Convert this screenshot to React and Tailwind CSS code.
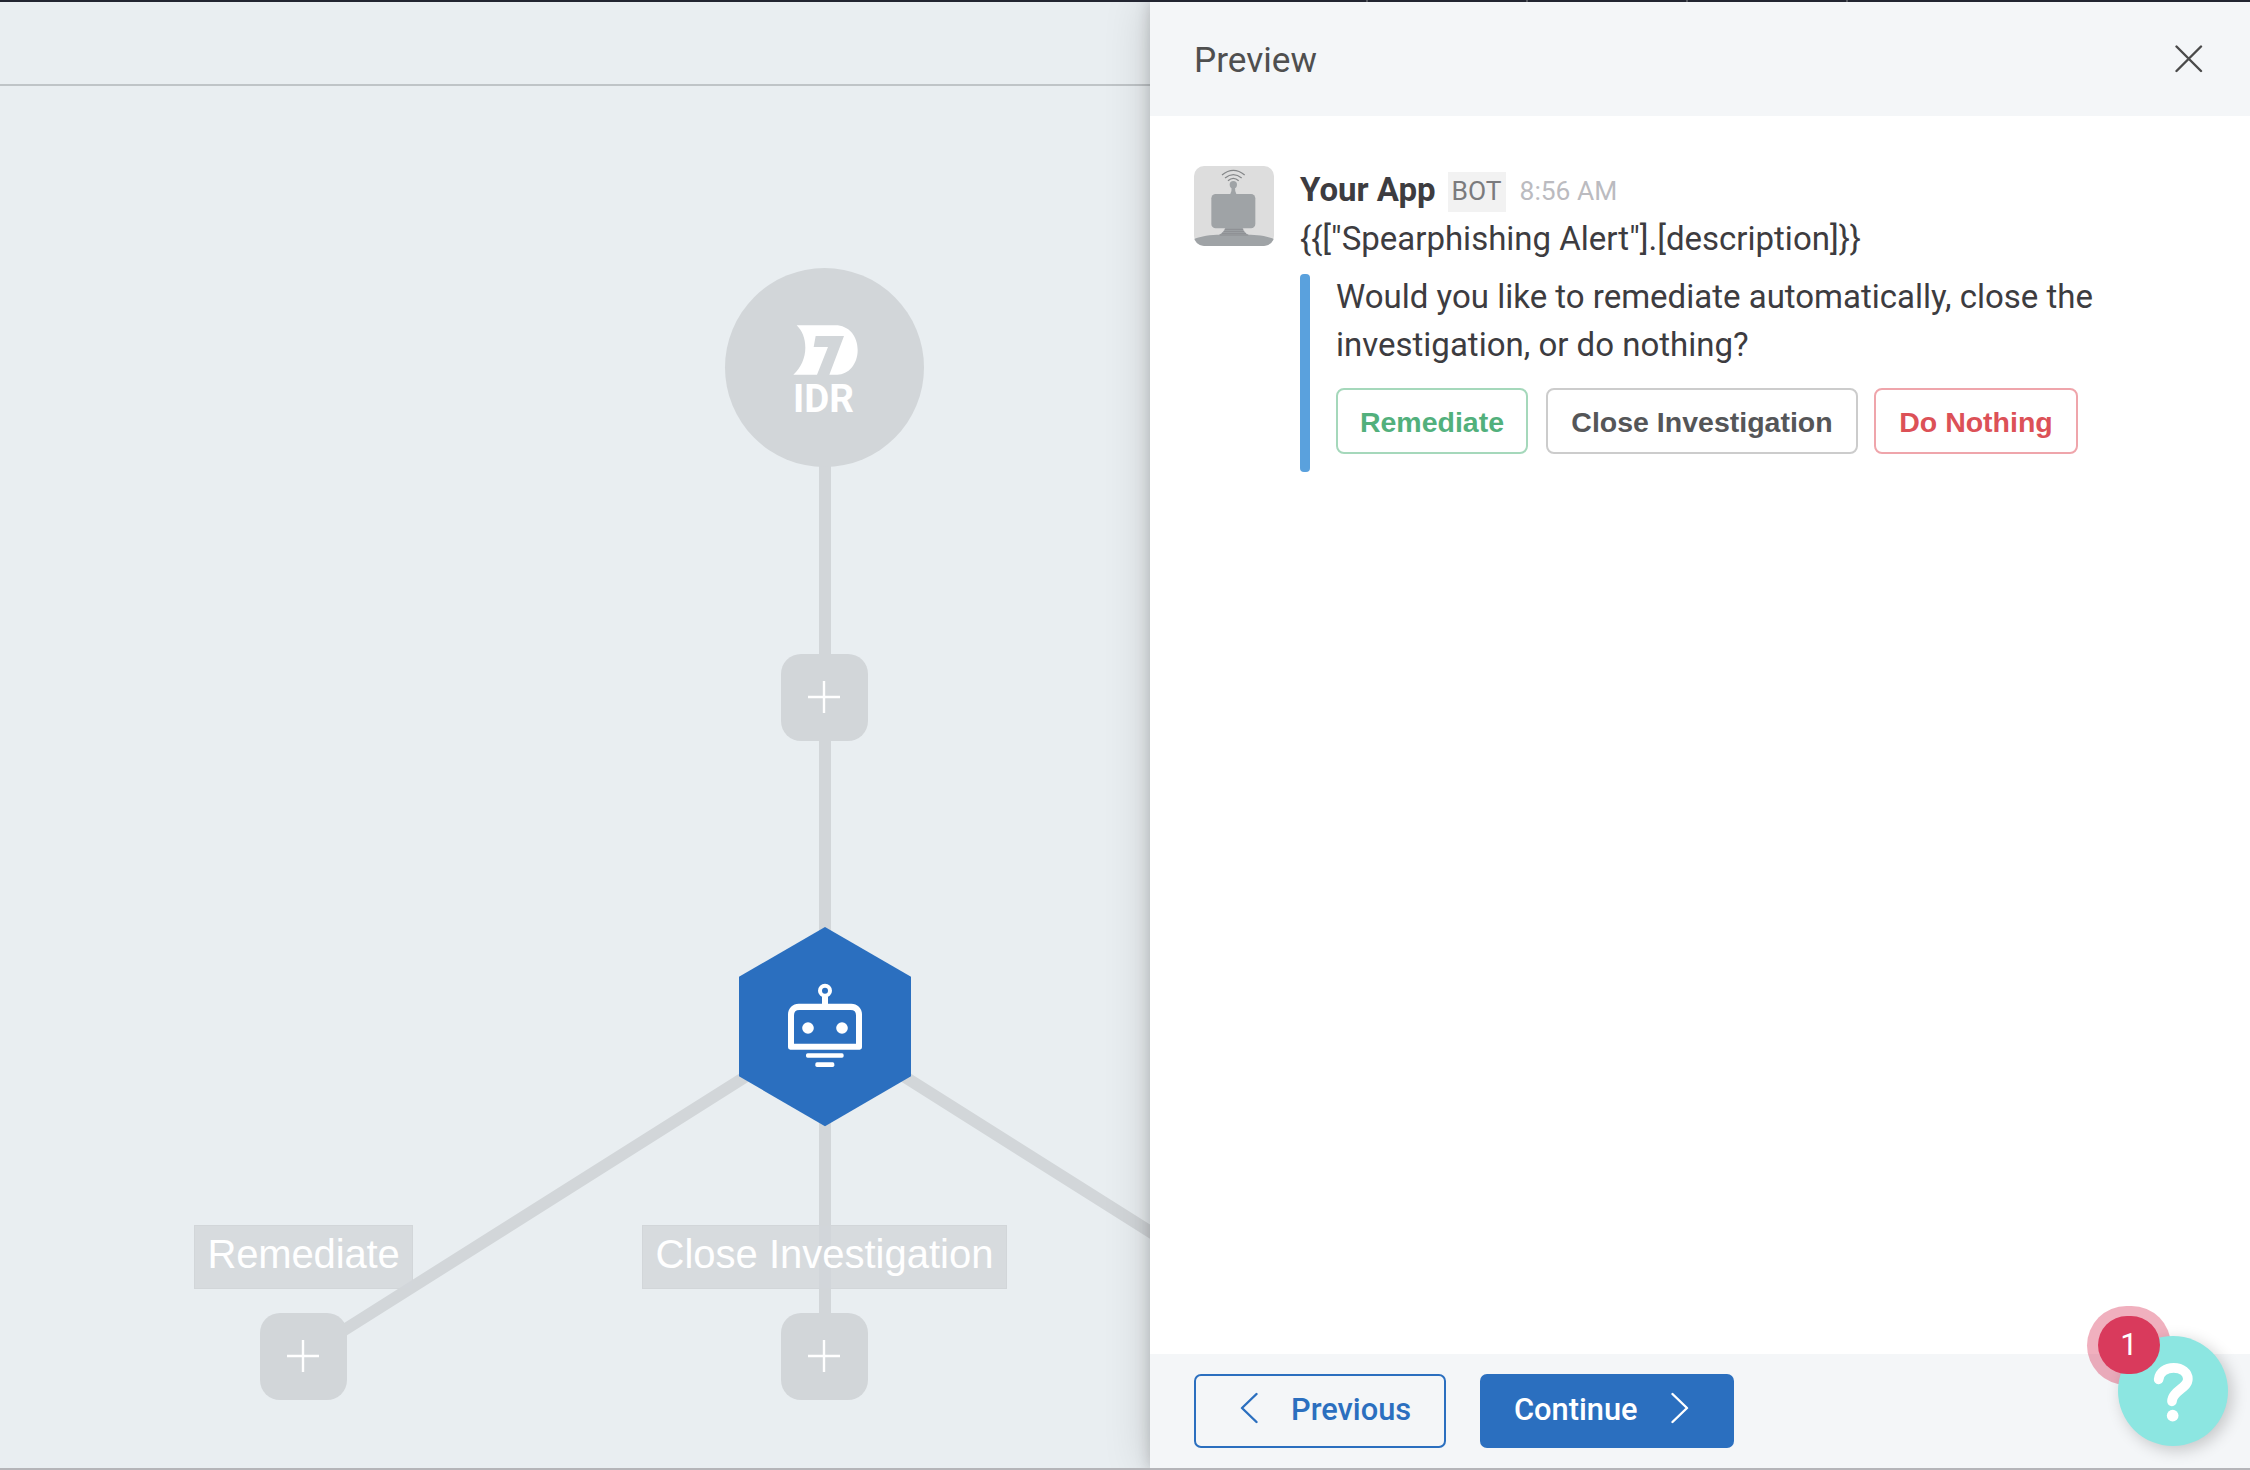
const ROBOTO = "font-['Roboto',sans-serif]";
const HELV = "font-['Liberation_Sans',Arial,sans-serif]";

function AddNode({ className }) {
  return (
    <div className={`absolute flex size-[87px] items-center justify-center rounded-[20px] bg-[#d2d6d9] pr-px pb-px ${className}`}>
      <svg className="size-8" viewBox="0 0 32 32" fill="none" stroke="#fff" strokeWidth="2.4">
        <path d="M16 0V32M0 16H32" />
      </svg>
    </div>
  );
}

function BranchLabel({ className, children }) {
  return (
    <div
      className={`absolute flex h-[64px] items-center justify-center border border-[#d2d6d9] bg-[#d2d6d9]/80 pb-[6px] text-[40px] leading-none whitespace-nowrap text-white ${HELV} ${className}`}
    >
      {children}
    </div>
  );
}

function Canvas() {
  return (
    <div className="relative flex-1 overflow-hidden bg-[#e9eef1]">
      {/* canvas origin sits 86px below the window's top edge */}
      <svg className="absolute top-0 left-0" width="1150" height="1382" viewBox="0 86 1150 1382" stroke="#d2d6d9" strokeWidth="12" fill="none">
        <path d="M825 367V1356M825 1026.5L303 1356M825 1026.5L1347 1356" />
      </svg>

      <div className="absolute top-[182px] left-[725px] size-[199px] rounded-full bg-[#d2d6d9]">
        <svg className="absolute top-[56.5px] left-[68px]" width="66" height="50" viewBox="279 222 198 150" fill="#fff">
          <path d="M290 223H406C446 223 473 255 473 297C473 340 445 371 412 371H388L432 255H347L341 288H384L351 371H280C303 350 316 320 316 290C316 262 307 240 290 223Z" />
        </svg>
        <div className={`absolute top-[112px] left-[-1px] w-full text-center text-[38.5px] leading-[38px] font-bold text-white ${ROBOTO}`}>IDR</div>
      </div>

      <AddNode className="top-[568px] left-[781px]" />

      <svg className="absolute top-[841px] left-[739px]" width="172" height="200" viewBox="57 51 516 600">
        <path d="M315 51L573 200V499L315 649L57 499V200Z" fill="#2b6fbf" />
        <circle cx="315" cy="242" r="15" fill="none" stroke="#fff" strokeWidth="12" />
        <path d="M315 260V285" stroke="#fff" strokeWidth="18" />
        <path
          fill="#fff"
          fillRule="evenodd"
          d="M236 281H394A32 32 0 0 1 426 313V412Q426 419 419 419H211Q204 419 204 412V313A32 32 0 0 1 236 281ZM238 300Q222 300 222 316V401H408V316Q408 300 392 300Z"
        />
        <circle cx="264" cy="354" r="17.5" fill="#fff" />
        <circle cx="366" cy="354" r="17.5" fill="#fff" />
        <rect x="258" y="430" width="113" height="13" rx="5" fill="#fff" />
        <rect x="286" y="457" width="57" height="14" rx="5" fill="#fff" />
      </svg>

      <BranchLabel className="top-[1139px] left-[194px] w-[219px] tracking-[-0.15px]">Remediate</BranchLabel>
      <BranchLabel className="top-[1139px] left-[642px] w-[365px]">Close Investigation</BranchLabel>
      <AddNode className="top-[1227px] left-[260px]" />
      <AddNode className="top-[1227px] left-[781px]" />
    </div>
  );
}

function Avatar() {
  return (
    <svg className="size-20 shrink-0 rounded-[10px] bg-[#dddddd]" viewBox="0 0 240 240">
      <g fill="none" stroke="#858789" strokeWidth="4">
        <path d="M84 27Q118 -1 152 27" />
        <path d="M93 36Q118 16 143 36" />
        <path d="M102 44Q118 30 134 44" />
      </g>
      <g fill="#9fa3a6">
        <circle cx="118" cy="56" r="11" />
        <path d="M113 60H123Q122 76 128 86H108Q114 76 113 60Z" />
        <rect x="52" y="84" width="132" height="103" rx="13" />
        <path d="M94 186H146Q148 198 164 208H74Q90 198 94 186Z" />
        <path d="M0 219C20 210 50 206 80 206H160C190 206 220 210 240 219V240H0Z" />
      </g>
      <path d="M92 190H148M89 196H151M84 202H156M77 207H163" stroke="#858789" strokeWidth="2.2" />
    </svg>
  );
}

function ActionButton({ className, children }) {
  return (
    <button className={`flex h-[66px] items-center justify-center rounded-[8px] border-2 bg-white pt-[3px] text-[28.5px] leading-none font-bold whitespace-nowrap ${HELV} ${className}`}>
      {children}
    </button>
  );
}

function HelpBubble() {
  return (
    <div className="absolute top-[1303px] left-[2085px] h-[145px] w-[145px]">
      <div className="absolute top-[2.5px] left-[2px] h-[79px] w-[84px] rounded-[40px] bg-[#d93a5c]/40" />
      <div className="absolute top-[33px] left-[33px] size-[110px] rounded-full bg-[#8ce6e1] shadow-[4px_4px_16px_rgba(0,0,0,0.2)]">
        <svg className="size-full" viewBox="204 168 330 330" fill="none">
          <path d="M326 298C328 276 348 263.5 371 263.5C396 263.5 413.5 278 413.5 297C413.5 325 367 332 366 364" stroke="#fff" strokeWidth="29" strokeLinecap="round" />
          <circle cx="368" cy="407" r="17.5" fill="#fff" />
        </svg>
      </div>
      <div className={`absolute top-[13px] left-[13px] flex h-[58px] w-[62px] items-center justify-center rounded-[29px] bg-[#d93a5c] pb-0.5 text-[31px] leading-none text-white ${ROBOTO}`}>
        1
      </div>
    </div>
  );
}

function PreviewPanel() {
  return (
    <aside className={`z-10 flex w-[1100px] flex-col bg-white text-[#3d3c40] shadow-[0_0_14px_rgba(0,0,0,0.18),0_0_44px_rgba(0,0,0,0.16)] ${ROBOTO}`}>
      <header className="flex h-[114px] items-center justify-between bg-[#f4f6f8] pr-[47px] pl-[44px]">
        <h1 className="pt-px text-[35.2px] leading-[40px] text-[#4f4f4f]">Preview</h1>
        <svg width="28" height="28" viewBox="0 0 28 28" stroke="#4a4a4a" strokeWidth="2.4" strokeLinecap="round">
          <path d="M1.5 1.5L26 26M26 1.5L1.5 26" />
        </svg>
      </header>

      <main className="flex flex-1 gap-[26px] pt-[50px] pl-[44px]">
        <Avatar />
        <div>
          <div className="flex h-12 items-center">
            <span className="pb-px text-[33px] leading-[47px] font-bold">Your App</span>
            <span className="mt-[3px] ml-3 flex h-10 w-[58px] items-center justify-center bg-[#f2f2f2] text-[26.4px] leading-none text-[#7b7b7d]">BOT</span>
            <span className="ml-[14px] pt-[3px] text-[26.4px] leading-none text-[#bbbbc0]">8:56 AM</span>
          </div>
          <p className="pt-px text-[33px] leading-[48px]">{'{{["Spearphishing Alert"].[description]}}'}</p>
          <div className="mt-[11px] flex h-[198px] gap-[26px]">
            <div className="w-[10px] rounded-[4px] bg-[#5aa1dd]" />
            <div>
              <p className="-mt-[1px] text-[33px] leading-[48px]">
                Would you like to remediate automatically, close the
                <br />
                investigation, or do nothing?
              </p>
              <div className="mt-[19px] flex">
                <ActionButton className="w-[192px] border-[#a5d8bb] text-[#52b07c]">Remediate</ActionButton>
                <ActionButton className="ml-[18px] w-[312px] border-[#cccccc] text-[#555658]">Close Investigation</ActionButton>
                <ActionButton className="ml-4 w-[204px] border-[#efa5ab] text-[#dc5157]">Do Nothing</ActionButton>
              </div>
            </div>
          </div>
        </div>
      </main>

      <footer className="flex h-[114px] gap-[34px] bg-[#f4f6f8] pt-5 pl-[44px] text-[30.8px] leading-none font-medium">
        <button className="flex h-[74px] w-[252px] items-center rounded-[7px] border-2 border-[#2b6fbf] pb-[2px] pl-[44px] text-[#2b6fbf]">
          <svg className="-mt-1" width="18" height="32" viewBox="0 0 18 32" fill="none" stroke="currentColor" strokeWidth="2.4" strokeLinecap="round" strokeLinejoin="round">
            <path d="M16.5 2L2 16L16.5 30" />
          </svg>
          <span className="ml-[33px]">Previous</span>
        </button>
        <button className="flex h-[74px] w-[254px] items-center rounded-[7px] bg-[#2b6fbf] pb-[2px] pl-[34px] text-white">
          <span>Continue</span>
          <svg className="-mt-1 ml-[33px]" width="18" height="32" viewBox="0 0 18 32" fill="none" stroke="currentColor" strokeWidth="2.4" strokeLinecap="round" strokeLinejoin="round">
            <path d="M1.5 2L16 16L1.5 30" />
          </svg>
        </button>
      </footer>
    </aside>
  );
}

export default function App() {
  return (
    <div className="relative flex h-[1470px] w-[2250px] flex-col overflow-hidden bg-[#e9eef1]">
      <div className="z-20 flex h-[2px] shrink-0 gap-[158px] bg-[#222531] pl-[1366px]">
        <span className="w-[2px] bg-[#55585f]" />
        <span className="w-[2px] bg-[#55585f]" />
        <span className="w-[2px] bg-[#55585f]" />
        <span className="w-[2px] bg-[#55585f]" />
      </div>
      <div className="flex min-h-0 flex-1">
        <div className="flex w-[1150px] flex-col">
          <div className="h-[84px] shrink-0 border-b-2 border-[#bfc4c7]" />
          <Canvas />
        </div>
        <PreviewPanel />
      </div>
      <div className="z-20 h-[2px] shrink-0 bg-[#b5b5b9]" />
      <div className="absolute inset-0 z-30">
        <HelpBubble />
      </div>
    </div>
  );
}
